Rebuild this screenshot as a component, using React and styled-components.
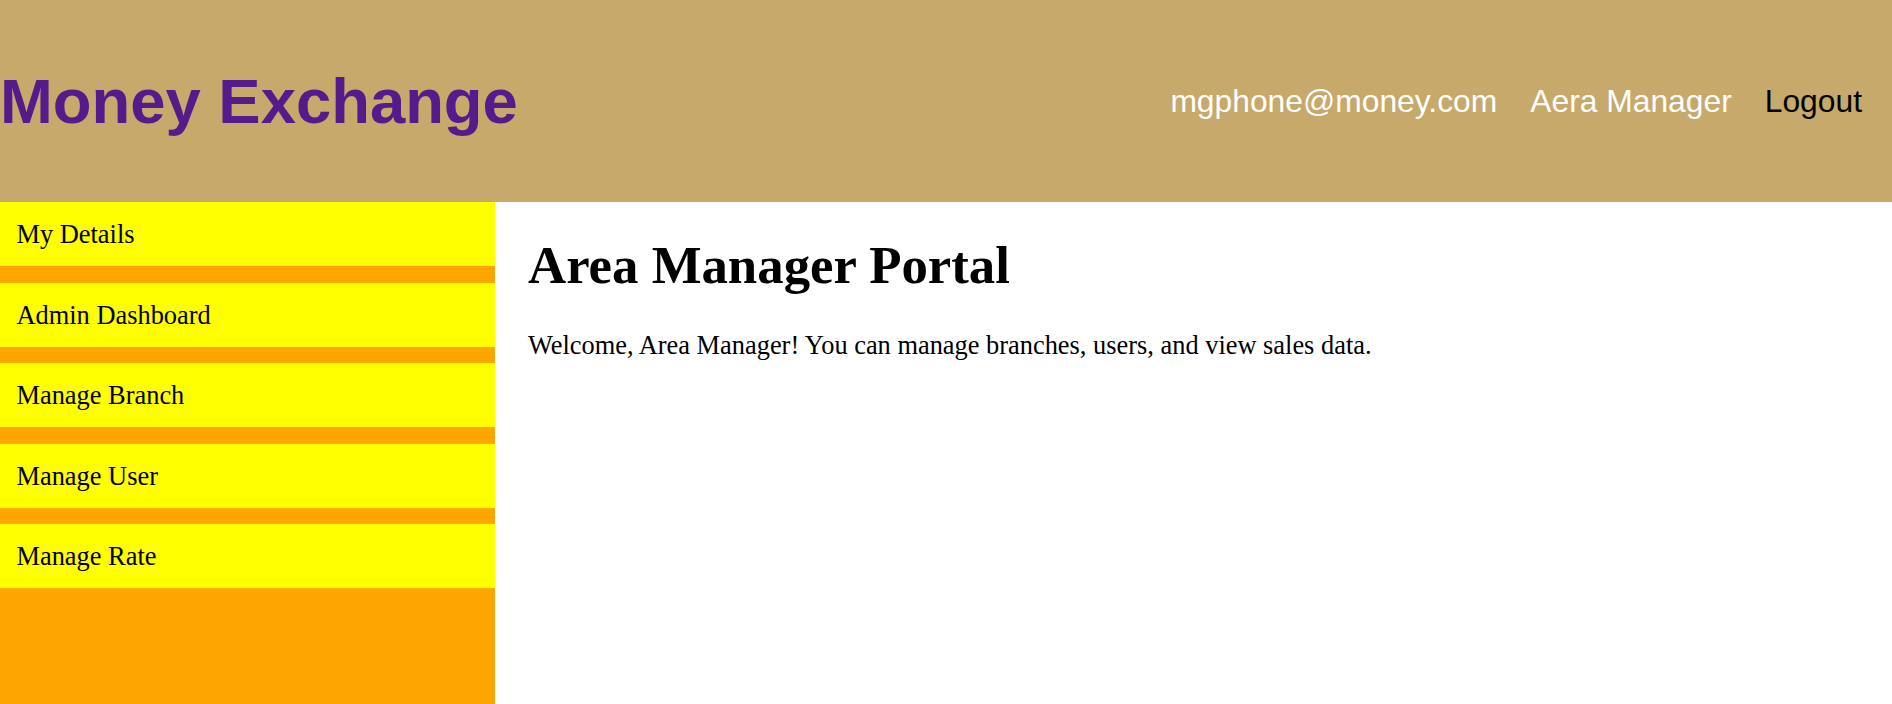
import styled, { createGlobalStyle } from "styled-components";

const GlobalStyle = createGlobalStyle`
  html, body {
    margin: 0;
    padding: 0;
  }
  body {
    font-family: "Liberation Serif", "Times New Roman", serif;
    background: #fff;
  }
`;

const Page = styled.div`
  display: flex;
  flex-direction: column;
  min-height: 100vh;
`;

const Header = styled.header`
  display: flex;
  align-items: center;
  justify-content: space-between;
  height: 202px;
  padding: 0 30px 0 0;
  box-sizing: border-box;
  background-color: #c6a96b;
  font-family: "Liberation Sans", Arial, sans-serif;
`;

const Logo = styled.h1`
  margin: 0;
  font-size: 63.4px;
  font-weight: bold;
  color: #551a8b;
`;

const Nav = styled.nav`
  display: flex;
  align-items: center;
  gap: 33px;
`;

const NavItem = styled.span`
  font-size: 31.8px;
  color: ${(props) => (props.$dark ? "#000" : "#fff")};
  cursor: pointer;
`;

const Body = styled.div`
  display: flex;
  flex: 1;
`;

const Sidebar = styled.aside`
  width: 495px;
  flex-shrink: 0;
  background-color: #ffa500;
`;

const MenuList = styled.ul`
  margin: 0;
  padding: 0;
  list-style: none;
`;

const MenuItem = styled.li`
  background-color: #ffff00;
  padding: 17px 16.5px;
  margin-bottom: 16.5px;
  font-size: 26.4px;
  line-height: 30px;
  color: #000;
  cursor: pointer;
`;

const Content = styled.main`
  flex: 1;
  padding: 0 33px;
`;

const Title = styled.h1`
  margin: 33px 0 35px;
  font-size: 52.8px;
  font-weight: bold;
`;

const Text = styled.p`
  margin: 0;
  font-size: 26.4px;
`;

const menu = [
  "My Details",
  "Admin Dashboard",
  "Manage Branch",
  "Manage User",
  "Manage Rate",
];

export default function App() {
  return (
    <Page>
      <GlobalStyle />
      <Header>
        <Logo>Money Exchange</Logo>
        <Nav>
          <NavItem>mgphone@money.com</NavItem>
          <NavItem>Aera Manager</NavItem>
          <NavItem $dark>Logout</NavItem>
        </Nav>
      </Header>
      <Body>
        <Sidebar>
          <MenuList>
            {menu.map((item) => (
              <MenuItem key={item}>{item}</MenuItem>
            ))}
          </MenuList>
        </Sidebar>
        <Content>
          <Title>Area Manager Portal</Title>
          <Text>
            Welcome, Area Manager! You can manage branches, users, and view
            sales data.
          </Text>
        </Content>
      </Body>
    </Page>
  );
}
